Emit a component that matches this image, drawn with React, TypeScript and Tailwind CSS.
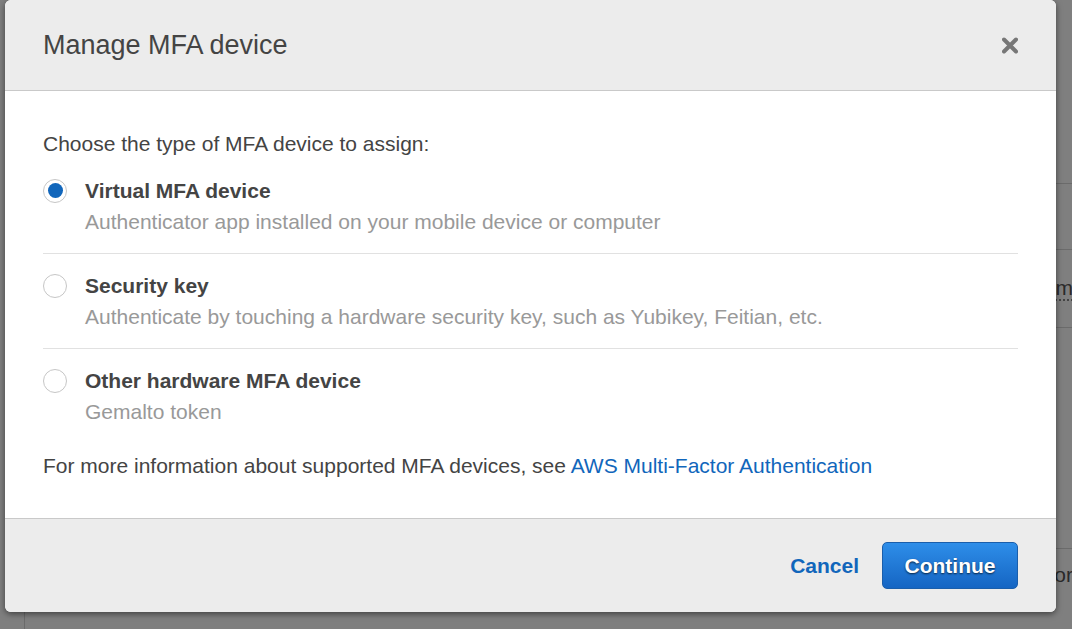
import React from "react";

const options = [
  {
    label: "Virtual MFA device",
    desc: "Authenticator app installed on your mobile device or computer",
    checked: true,
  },
  {
    label: "Security key",
    desc: "Authenticate by touching a hardware security key, such as Yubikey, Feitian, etc.",
    checked: false,
  },
  {
    label: "Other hardware MFA device",
    desc: "Gemalto token",
    checked: false,
  },
];

function Radio({ checked }: { checked: boolean }) {
  return (
    <span className="flex h-[24px] w-[24px] shrink-0 items-center justify-center rounded-full border border-[#c6c6c6] bg-white">
      {checked && <span className="h-[15px] w-[15px] rounded-full bg-[#1166bb]" />}
    </span>
  );
}

export default function App() {
  return (
    <div
      className="relative h-[629px] w-[1072px] overflow-hidden bg-white text-[#444]"
      style={{ fontFamily: '"Liberation Sans", Arial, sans-serif' }}
    >
      {/* background page */}
      <div className="flex h-full">
        <div className="w-[24px] shrink-0" />
        <div className="flex flex-1 flex-col overflow-hidden border-l border-[#d6d6d6] text-[21px]">
          <div className="h-[184px] border-b border-[#d6d6d6]" />
          <div className="h-[66px] border-b border-[#d6d6d6]" />
          <div className="flex h-[78px] items-center justify-end border-b border-[#d6d6d6]">
            <span className="mr-[-1px] border-b-2 border-dotted border-[#888] leading-[22px] text-[#555]">Item</span>
          </div>
          <div className="h-[221px] border-b border-[#d6d6d6]" />
          <div className="flex h-[52px] items-center justify-end text-[#555]">
            <span className="mr-[-1px]">Vendor</span>
          </div>
        </div>
      </div>

      {/* overlay */}
      <div className="absolute inset-0 bg-black/50" />

      {/* modal */}
      <div className="absolute left-[5px] top-0 flex w-[1051px] flex-col overflow-hidden rounded-[6px] bg-white shadow-[0_2px_6px_rgba(0,0,0,0.5)]">
        <div className="flex h-[91px] items-center justify-between border-b border-[#c9c9c9] bg-[#ececec] pl-[38px] pr-[38px]">
          <h1 className="text-[27px] font-normal text-[#444]">Manage MFA device</h1>
          <svg width="16" height="17" viewBox="0 0 16 17" className="mt-[1px]">
            <path d="M2 2.5 L14 14.5 M14 2.5 L2 14.5" stroke="#777" strokeWidth="4" strokeLinecap="round" />
          </svg>
        </div>

        <div className="px-[38px] pb-[37px] pt-[37px] text-[21px] leading-[31px]">
          <p className="text-[#444]">Choose the type of MFA device to assign:</p>
          <div className="flex flex-col">
            {options.map((o, i) => (
              <div
                key={o.label}
                className={
                  i < options.length - 1
                    ? "border-b border-[#e1e1e1] pb-[16px] pt-[16px]"
                    : "pb-[16px] pt-[16px]"
                }
              >
                <div className="flex items-center gap-[18px]">
                  <Radio checked={o.checked} />
                  <span className="font-bold text-[#444]">{o.label}</span>
                </div>
                <div className="pl-[42px] text-[#999]">{o.desc}</div>
              </div>
            ))}
          </div>
          <p className="mt-[7px] text-[#444]">
            For more information about supported MFA devices, see{" "}
            <span className="text-[#1166bb]">AWS Multi-Factor Authentication</span>
          </p>
        </div>

        <div className="flex h-[94px] items-center justify-end gap-[23px] border-t border-[#c9c9c9] bg-[#ececec] px-[38px]">
          <span className="text-[21px] font-bold text-[#1166bb]">Cancel</span>
          <button className="h-[47px] w-[136px] rounded-[5px] border border-[#1a5eab] bg-gradient-to-b from-[#2e8ee9] to-[#1565c3] text-[21px] font-bold text-white [text-shadow:0_1px_2px_rgba(0,0,0,0.7)]">
            Continue
          </button>
        </div>
      </div>
    </div>
  );
}
